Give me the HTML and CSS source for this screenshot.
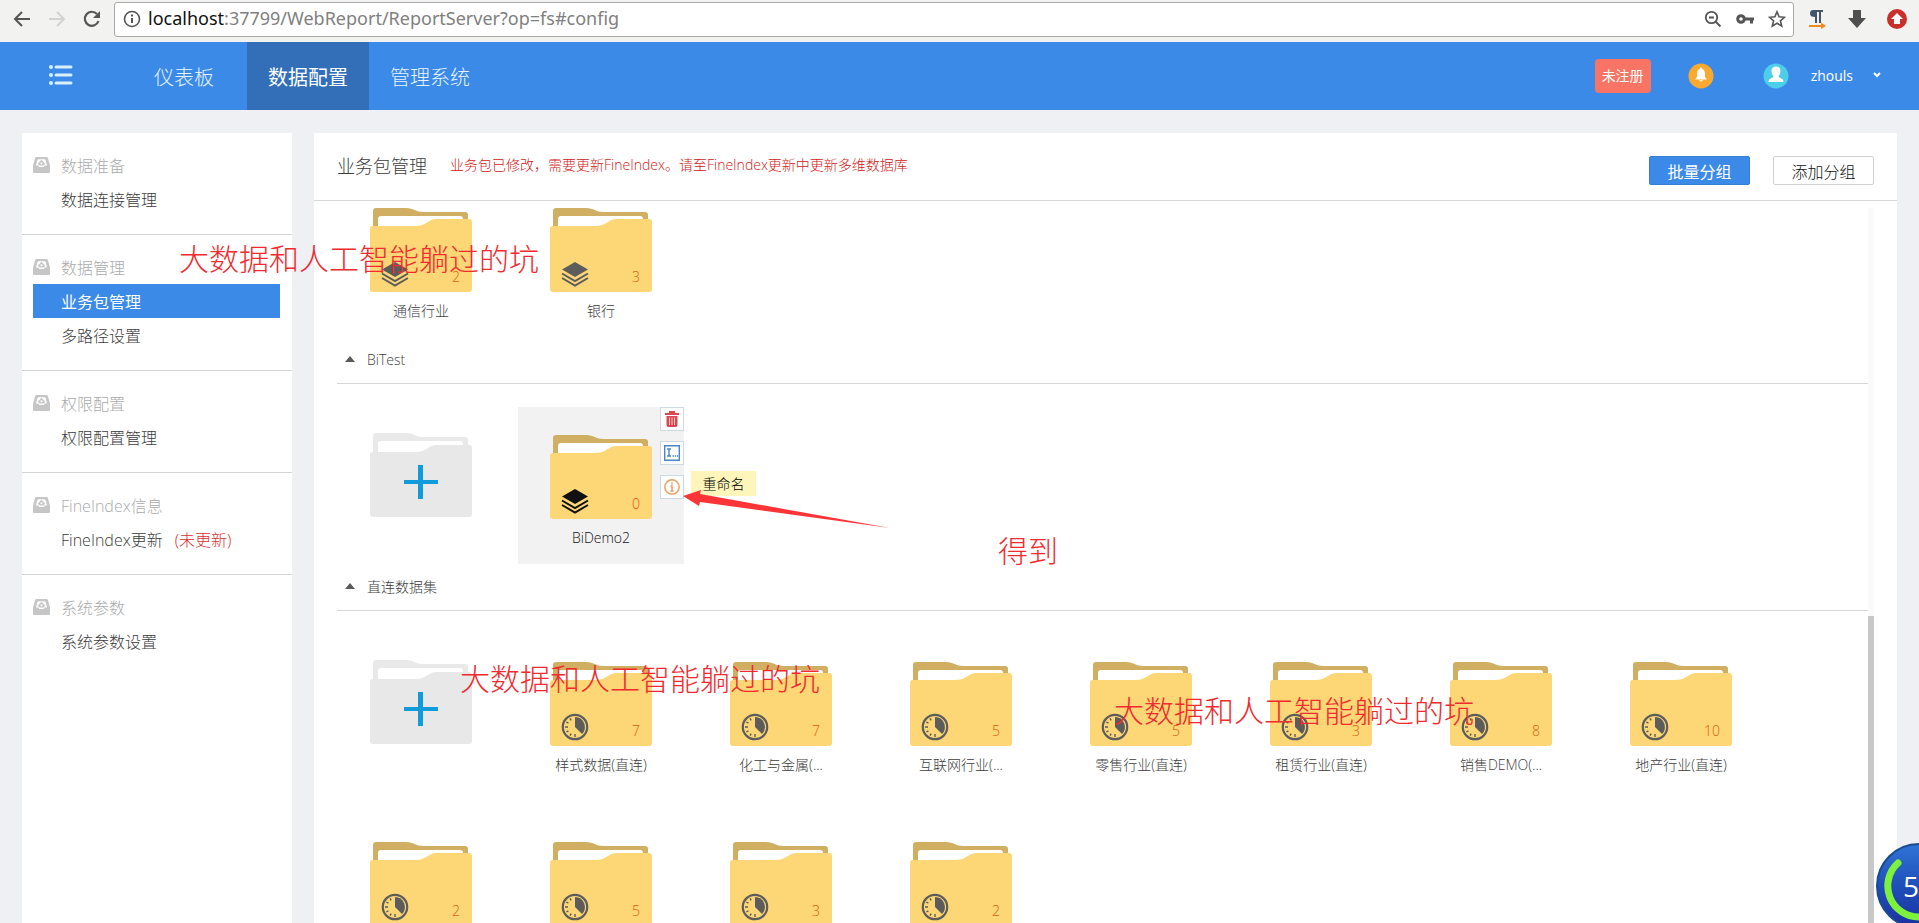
FILE: index.html
```html
<!DOCTYPE html>
<html lang="zh-CN">
<head>
<meta charset="utf-8">
<title>业务包管理</title>
<link rel="stylesheet" href="styles.css">
</head>
<body>
<svg class="defs" aria-hidden="true">
  <symbol id="folder" viewBox="0 0 102 84">
    <path d="M3 30V3q0-3 3-3h30c8 0 9 4 18 4h41q3 0 3 3v20z" fill="#d0af62"/>
    <path d="M8 26V11q0-3 3-3h79q3 0 3 3v12z" fill="#fff"/>
    <path d="M0 81V21q0-3 3-3h42c12 0 13-7 22-7h32q3 0 3 3v67q0 3-3 3H3q-3 0-3-3z" fill="#fdd675"/>
  </symbol>
  <symbol id="folder-add" viewBox="0 0 102 84">
    <path d="M3 30V3q0-3 3-3h30c8 0 9 4 18 4h41q3 0 3 3v20z" fill="#e9e9e9"/>
    <path d="M8 26V11q0-3 3-3h79q3 0 3 3v12z" fill="#fff"/>
    <path d="M0 81V22q0-3 3-3h42c12 0 13-7 22-7h32q3 0 3 3v66q0 3-3 3H3q-3 0-3-3z" fill="#e8e8e8"/>
    <path d="M48 32h5v15h15v4H53v15h-5V51H34v-4h14z" fill="#109bdb"/>
  </symbol>
  <symbol id="layers" viewBox="0 0 28 26">
    <path d="M14 1 27 8.500 14 16 1 8.500z" fill="currentColor"/>
    <path d="M1 12.500 14 20l13-7.500M1 17 14 24.500 27 17" fill="none" stroke="currentColor" stroke-width="2"/>
  </symbol>
  <symbol id="clock" viewBox="0 0 28 28">
    <circle cx="14" cy="14" r="12.200" fill="none" stroke="currentColor" stroke-width="2.200"/>
    <path d="M14 4a10 10 0 0 1 7 17L14 14z" fill="currentColor"/>
    <path d="M4 14h3M14 21v3M5.400 9l2 1.200M9 5.400l1.200 2M5.400 19l2-1.200M9 22.600l1.200-2" stroke="currentColor" stroke-width="1.400"/>
  </symbol>
  <symbol id="drawer" viewBox="0 0 17 16">
    <path d="M3.500 0h10q1 0 1.400 1L17 8.500V15q0 1-1 1H1q-1 0-1-1V8.500L2.100 1q.4-1 1.400-1z" fill="#c6c6c6"/>
    <path d="M3 8.500 4.300 3.500Q4.600 2.200 5.700 2.200h5.600q1.100 0 1.400 1.300L14 8.500h-2.500L10.800 10H6.200l-.7-1.500z" fill="#fff"/>
    <path d="M8.500 2.800 12.300 6.800l-1.800 1.700h-4L4.700 6.800z" fill="#c6c6c6"/>
    <circle cx="8.500" cy="6.300" r="1.100" fill="#fff"/>
  </symbol>
</svg>

<div class="toolbar">
  <div class="history">
    <button class="icon-btn" aria-label="后退"><svg width="18" height="18" viewBox="0 0 18 18"><path d="M17 9H2M9 2 2 9l7 7" fill="none" stroke="#555" stroke-width="2"/></svg></button>
    <button class="icon-btn" aria-label="前进"><svg width="18" height="18" viewBox="0 0 18 18"><path d="M1 9h15M9 2l7 7-7 7" fill="none" stroke="#d2d2d2" stroke-width="2"/></svg></button>
    <button class="icon-btn" aria-label="刷新"><svg width="18" height="18" viewBox="0 0 18 18"><path d="M15.500 11A7 7 0 1 1 14 4" fill="none" stroke="#555" stroke-width="2.200"/><path d="M17 1v7h-7z" fill="#555"/></svg></button>
  </div>
  <div class="address">
    <svg width="18" height="18" viewBox="0 0 18 18"><circle cx="9" cy="9" r="7.500" fill="none" stroke="#555" stroke-width="1.600"/><path d="M9 8v5M9 4.500v2" stroke="#555" stroke-width="2"/></svg>
    <div class="url"><span class="host">localhost</span>:37799/WebReport/ReportServer?op=fs#config</div>
    <button class="icon-btn" aria-label="缩放"><svg width="18" height="18" viewBox="0 0 18 18"><circle cx="7.500" cy="7.500" r="5.700" fill="none" stroke="#555" stroke-width="1.800"/><path d="M5 7.500h5M11.500 11.500l5 5" stroke="#555" stroke-width="1.800"/></svg></button>
    <button class="icon-btn" aria-label="密码"><svg width="18" height="18" viewBox="0 0 18 18"><circle cx="5" cy="9" r="3.300" fill="none" stroke="#555" stroke-width="3"/><path d="M8 7.500h10v3h-1v3h-3v-3H8z" fill="#555"/></svg></button>
    <button class="icon-btn" aria-label="收藏"><svg width="18" height="18" viewBox="0 0 18 18"><path d="m9 1.800 2.100 5 5.400.5-4.100 3.500 1.300 5.300L9 13.200l-4.700 2.900 1.300-5.300L1.500 7.300l5.400-.5z" fill="none" stroke="#555" stroke-width="1.600"/></svg></button>
  </div>
  <div class="extensions">
    <button class="icon-btn" aria-label="段落"><svg width="20" height="20" viewBox="0 0 20 20"><path d="M6 1h10v2h-2v11h-2V3h-2v11H8V8Q3 8 3 4.500T6 1z" fill="#44566a"/><path d="M2 16h12v-2.500l5 3.500-5 3v-2H2z" fill="#f28a1c"/></svg></button>
    <button class="icon-btn" aria-label="下载"><svg width="20" height="20" viewBox="0 0 20 20"><path d="M6 1h8v8h5l-9 10L1 9h5z" fill="#4f4f4f"/></svg></button>
    <button class="icon-btn" aria-label="更新"><svg width="20" height="20" viewBox="0 0 20 20"><circle cx="10" cy="10" r="10" fill="#c92f2b"/><path d="m10 4 6 6h-3v5H7v-5H4z" fill="#fff"/></svg></button>
  </div>
</div>

<header class="header">
  <button class="menu" aria-label="菜单"><svg width="24" height="20" viewBox="0 0 24 20"><path d="M7 2h15M7 10h15M7 18h15" stroke="#d9f0ff" stroke-width="3" stroke-linecap="round"/><circle cx="2" cy="2" r="2" fill="#d9f0ff"/><circle cx="2" cy="10" r="2" fill="#d9f0ff"/><circle cx="2" cy="18" r="2" fill="#d9f0ff"/></svg></button>
  <nav class="tabs">
    <a class="tab first" href="#dashboard">仪表板</a>
    <a class="tab active" href="#config">数据配置</a>
    <a class="tab" href="#system">管理系统</a>
  </nav>
  <div class="user">
    <button class="register">未注册</button>
    <button class="icon-btn" aria-label="通知"><svg width="26" height="26" viewBox="0 0 26 26"><circle cx="13" cy="13" r="12.500" fill="#fba92f"/><path d="M13 4.500q1.200 0 1.400 1.400Q17 7 17 11v3l2 2.500H7L9 14v-3q0-4 2.600-5.100Q11.800 4.500 13 4.500zM11 17.300h4q-.5 1.200-2 1.200t-2-1.200z" fill="#fff"/></svg></button>
    <button class="icon-btn avatar" aria-label="头像"><svg width="26" height="26" viewBox="0 0 26 26"><circle cx="13" cy="13" r="12.500" fill="#4dcfea"/><path d="M13 3.500q4.500 0 4.500 5 0 2.500-2 4.500 0 1.300 2 2 3 1 3 4H5.500q0-3 3-4 2-.7 2-2-2-2-2-4.500 0-5 4.500-5z" fill="#fff"/></svg></button>
    <button class="account">zhouls<svg width="8" height="6" viewBox="0 0 8 6"><path d="m1 1 3 3 3-3" fill="none" stroke="#fff" stroke-width="2"/></svg></button>
  </div>
</header>

<div class="page">
  <aside class="sidebar">
    <section class="section">
      <h2 class="heading"><svg width="17" height="16"><use href="#drawer"/></svg>数据准备</h2>
      <a class="item" href="#connection">数据连接管理</a>
    </section>
    <section class="section">
      <h2 class="heading"><svg width="17" height="16"><use href="#drawer"/></svg>数据管理</h2>
      <a class="item selected" href="#packages">业务包管理</a>
      <a class="item" href="#paths">多路径设置</a>
    </section>
    <section class="section">
      <h2 class="heading"><svg width="17" height="16"><use href="#drawer"/></svg>权限配置</h2>
      <a class="item" href="#permission">权限配置管理</a>
    </section>
    <section class="section">
      <h2 class="heading"><svg width="17" height="16"><use href="#drawer"/></svg>FineIndex信息</h2>
      <a class="item" href="#fineindex">FineIndex更新<span class="pending">(未更新)</span></a>
    </section>
    <section class="section">
      <h2 class="heading"><svg width="17" height="16"><use href="#drawer"/></svg>系统参数</h2>
      <a class="item" href="#params">系统参数设置</a>
    </section>
  </aside>

  <main class="panel">
    <div class="panel-head">
      <h1 class="title">业务包管理</h1>
      <p class="warning">业务包已修改，需要更新FineIndex。请至FineIndex更新中更新多维数据库</p>
      <div class="actions">
        <button class="btn primary">批量分组</button>
        <button class="btn">添加分组</button>
      </div>
    </div>
    <div class="scroll-wrap">
      <div class="scroller">
        <div class="tiles scrolled">
          <div class="tile"><div class="folder"><svg class="shape"><use href="#folder"/></svg><svg class="mark layers"><use href="#layers"/></svg><span class="count">2</span></div><div class="name">通信行业</div></div>
          <div class="tile"><div class="folder"><svg class="shape"><use href="#folder"/></svg><svg class="mark layers"><use href="#layers"/></svg><span class="count">3</span></div><div class="name">银行</div></div>
        </div>
        <h3 class="group"><span class="caret"></span>BiTest</h3>
        <div class="tiles">
          <button class="tile add" aria-label="添加业务包"><svg class="shape"><use href="#folder-add"/></svg></button>
          <div class="tile hovered">
            <div class="folder"><svg class="shape"><use href="#folder"/></svg><svg class="mark layers"><use href="#layers"/></svg><span class="count">0</span></div><div class="name">BiDemo2</div>
            <div class="tools">
              <button class="tool" aria-label="删除"><svg width="16" height="18" viewBox="0 0 16 18"><path d="M5 1h6v2h4v2H1V3h4zM2.500 6h11v9q0 2-2 2h-7q-2 0-2-2z" fill="#dc4650"/><path d="M5.500 7.500V15M8 7.500V15M10.500 7.500V15" stroke="#f9c8ca" stroke-width="1"/></svg></button>
              <button class="tool" aria-label="重命名"><svg width="16" height="16" viewBox="0 0 16 16"><path d="M.7.7h14.600v14.600H.7z" fill="none" stroke="#4a86cc" stroke-width="1.400"/><path d="M3 4h4M5 4v7M3 11h4M8.500 11H10M10.800 11h1.400M13 11h1.200" stroke="#4a86cc" stroke-width="1.400"/></svg></button>
              <button class="tool" aria-label="信息"><svg width="16" height="16" viewBox="0 0 16 16"><circle cx="8" cy="8" r="7.200" fill="none" stroke="#ee9a57" stroke-width="1.400"/><path d="M8 3.500v2M6.500 7H8v5M6.500 12h3" fill="none" stroke="#ee9a57" stroke-width="1.500"/></svg></button>
            </div>
            <div class="tip" role="tooltip">重命名</div>
            <svg class="arrow" width="210" height="42" viewBox="0 0 210 42"><path d="m0 8 18-6-1 4 190 34L17 14l-1 4z" fill="#fb3437"/></svg>
          </div>
        </div>
        <h3 class="group"><span class="caret"></span>直连数据集</h3>
        <div class="tiles">
          <button class="tile add" aria-label="添加数据集"><svg class="shape"><use href="#folder-add"/></svg></button>
          <div class="tile"><div class="folder"><svg class="shape"><use href="#folder"/></svg><svg class="mark clock"><use href="#clock"/></svg><span class="count">7</span></div><div class="name">样式数据(直连)</div></div>
          <div class="tile"><div class="folder"><svg class="shape"><use href="#folder"/></svg><svg class="mark clock"><use href="#clock"/></svg><span class="count">7</span></div><div class="name">化工与金属(...</div></div>
          <div class="tile"><div class="folder"><svg class="shape"><use href="#folder"/></svg><svg class="mark clock"><use href="#clock"/></svg><span class="count">5</span></div><div class="name">互联网行业(...</div></div>
          <div class="tile"><div class="folder"><svg class="shape"><use href="#folder"/></svg><svg class="mark clock"><use href="#clock"/></svg><span class="count">5</span></div><div class="name">零售行业(直连)</div></div>
          <div class="tile"><div class="folder"><svg class="shape"><use href="#folder"/></svg><svg class="mark clock"><use href="#clock"/></svg><span class="count">3</span></div><div class="name">租赁行业(直连)</div></div>
          <div class="tile"><div class="folder"><svg class="shape"><use href="#folder"/></svg><svg class="mark clock"><use href="#clock"/></svg><span class="count">8</span></div><div class="name">销售DEMO(...</div></div>
          <div class="tile"><div class="folder"><svg class="shape"><use href="#folder"/></svg><svg class="mark clock"><use href="#clock"/></svg><span class="count">10</span></div><div class="name">地产行业(直连)</div></div>
          <div class="tile"><div class="folder"><svg class="shape"><use href="#folder"/></svg><svg class="mark clock"><use href="#clock"/></svg><span class="count">2</span></div></div>
          <div class="tile"><div class="folder"><svg class="shape"><use href="#folder"/></svg><svg class="mark clock"><use href="#clock"/></svg><span class="count">5</span></div></div>
          <div class="tile"><div class="folder"><svg class="shape"><use href="#folder"/></svg><svg class="mark clock"><use href="#clock"/></svg><span class="count">3</span></div></div>
          <div class="tile"><div class="folder"><svg class="shape"><use href="#folder"/></svg><svg class="mark clock"><use href="#clock"/></svg><span class="count">2</span></div></div>
        </div>
      </div>
      <div class="track"><div class="thumb"></div></div>
    </div>
  </main>
</div>

<div class="note note-a">大数据和人工智能躺过的坑</div>
<div class="note note-b">大数据和人工智能躺过的坑</div>
<div class="note note-c">大数据和人工智能躺过的坑</div>
<div class="note note-d">得到</div>

<div class="gauge">
  <svg width="86" height="86" viewBox="0 0 86 86">
    <defs><linearGradient id="ball" x2="0" y2="1"><stop offset="0" stop-color="#2f74d6"/><stop offset=".5" stop-color="#1f4fb8"/><stop offset="1" stop-color="#1a2fa0"/></linearGradient></defs>
    <circle cx="43" cy="43" r="42" fill="url(#ball)" stroke="#1b4a90" stroke-width="2"/>
    <path d="M22 20A31 31 0 0 0 43 74" fill="none" stroke="#7cf23c" stroke-width="7" stroke-linecap="round"/>
  </svg>
  <span class="gauge-value">5</span>
</div>
</body>
</html>
```
FILE: styles.css
```css
* { box-sizing: border-box; }

body {
  margin: 0;
  height: 100vh;
  display: flex;
  flex-direction: column;
  position: relative;
  overflow: hidden;
  background: #eff0f4;
  color: #3c3c3c;
  font-family: "Open Sans", "Noto Sans CJK SC", sans-serif;
  font-size: 16px;
  font-weight: 300;
}

button { font: inherit; color: inherit; border: 0; background: none; padding: 0; }
a { color: inherit; text-decoration: none; }
h1, h2, h3, p { margin: 0; font-weight: inherit; }
svg { display: block; flex: none; }
.defs { position: absolute; width: 0; height: 0; }
.icon-btn { flex: none; }

/* Browser bar */
.toolbar {
  flex: none;
  height: 42px;
  padding: 1px 12px 5px 13px;
  display: flex;
  align-items: center;
  background: #f2f2f1;
}
.history { display: flex; gap: 17px; width: 101px; }
.address {
  flex: 1;
  height: 35px;
  padding: 0 7px 0 8px;
  display: flex;
  align-items: center;
  gap: 14px;
  background: #fff;
  border: 1px solid #a9a9a9;
  border-radius: 3px;
}
.url {
  flex: 1;
  margin-left: -7px;
  padding-bottom: 2px;
  font-family: "Noto Sans", "Noto Sans CJK SC", sans-serif;
  font-size: 18px;
  font-weight: 400;
  color: #808080;
}
.host { color: #111; }
.extensions { display: flex; gap: 20px; padding-left: 13px; }

/* Application header */
.header {
  flex: none;
  height: 68px;
  display: flex;
  align-items: stretch;
  background: #3c8ae8;
  color: #fff;
}
.menu { margin-left: 49px; width: 84px; padding-bottom: 2px; }
.tabs { flex: 1; display: flex; }
.tab {
  padding: 0 21px;
  display: flex;
  align-items: center;
  font-size: 20px;
  color: #e6f4ff;
}
.tab.first { margin-right: 12px; }
.tab.active { background: #336fb9; color: #fff; font-weight: 400; }
.user { display: flex; align-items: center; padding-right: 38px; }
.register {
  width: 56px;
  height: 34px;
  margin-right: 37px;
  padding-bottom: 2px;
  border-radius: 4px;
  background: #f87464;
  font-size: 14px;
  font-weight: 400;
}
.avatar { margin: 0 22px 0 49px; }
.account {
  display: flex;
  align-items: center;
  gap: 20px;
  padding-bottom: 2px;
  font-size: 14px;
  font-weight: 400;
}

/* Page body */
.page {
  flex: 1;
  min-height: 0;
  display: flex;
  gap: 22px;
  padding: 23px 22px 0;
}
.sidebar { flex: none; width: 270px; background: #fff; }
.section { padding: 15px 12px 18px 11px; border-bottom: 1px solid #d2d4d6; }
.section:last-child { border: 0; }
.heading {
  display: flex;
  align-items: center;
  gap: 11px;
  height: 34px;
  font-size: 16px;
  color: #ababab;
}
.item { display: flex; align-items: center; height: 34px; padding-left: 28px; }
.item.selected { background: #3c8ae8; color: #fff; font-weight: 400; }
.pending { margin-left: 12px; color: #d93030; }

.panel { flex: 1; min-width: 0; display: flex; flex-direction: column; background: #fff; }
.panel-head {
  flex: none;
  height: 68px;
  padding: 0 23px;
  display: flex;
  align-items: center;
  gap: 23px;
  border-bottom: 1px solid #d4d6d8;
}
.title { padding-bottom: 3px; font-size: 18px; }
.warning { padding-bottom: 5px; font-size: 14px; color: #cf2020; }
.actions { margin-left: auto; display: flex; gap: 23px; padding-top: 8px; }
.btn {
  width: 101px;
  height: 29px;
  border: 1px solid #d0d2d5;
  border-radius: 2px;
  color: #111;
}
.btn.primary { background: #3c8ae8; border-color: #347fd8; color: #fff; font-weight: 400; }

.scroll-wrap { flex: 1; min-height: 0; display: flex; padding: 7px 23px 0; }
.scroller { flex: 1; min-width: 0; overflow: hidden; }
.track { flex: none; width: 6px; display: flex; align-items: flex-end; background: #fafafa; }
.thumb { width: 6px; height: 43%; background: #c8c8c8; }

.group {
  height: 47px;
  display: flex;
  align-items: center;
  gap: 12px;
  padding: 0 0 2px 8px;
  font-size: 14px;
  border-bottom: 1px solid #d4d6d8;
}
.caret { border: 5px solid transparent; border-top: 0; border-bottom: 6px solid #5a5a5a; }
.tiles {
  display: grid;
  grid-template-columns: repeat(auto-fill, 166px);
  gap: 23px 14px;
  padding: 23px 0 0 1px;
}
.tiles.scrolled { margin-top: -28px; padding-top: 0; }
.tile {
  position: relative;
  height: 157px;
  padding-top: 28px;
  display: flex;
  flex-direction: column;
  align-items: center;
  gap: 9px;
}
.tile.add { padding-top: 26px; }
.tile.hovered { background: #f2f2f2; color: #111; }
.folder { position: relative; color: #5c5c5c; }
.hovered .folder { color: #111; }
.shape { width: 102px; height: 84px; }
.mark { position: absolute; left: 11px; }
.mark.layers { top: 53px; width: 28px; height: 26px; }
.mark.clock { top: 51px; width: 28px; height: 28px; }
.count {
  position: absolute;
  right: 12px;
  bottom: 5px;
  line-height: 20px;
  font-size: 14px;
  color: #d6610f;
}
.hovered .count { color: #ee4f16; }
.name { font-size: 14px; line-height: 20px; }

.tools {
  position: absolute;
  top: 0;
  right: 0;
  display: flex;
  flex-direction: column;
  gap: 10px;
}
.tool {
  width: 24px;
  height: 24px;
  display: flex;
  align-items: center;
  justify-content: center;
  background: #fff;
  border: 1px solid #ccdbe2;
}
.tip {
  position: absolute;
  left: 173px;
  top: 64px;
  width: 65px;
  line-height: 25px;
  text-align: center;
  font-size: 14px;
  color: #000;
  background: #fdf5b9;
}
.arrow { position: absolute; left: 165px; top: 81px; }

/* Annotations over the page */
.note {
  position: absolute;
  font-size: 30px;
  line-height: 36px;
  font-weight: 300;
  color: #f02a2e;
  white-space: nowrap;
}
.note-a { left: 179px; top: 241px; }
.note-b { left: 460px; top: 661px; }
.note-c { left: 1114px; top: 693px; }
.note-d { left: 998px; top: 533px; }

.gauge { position: absolute; right: -43px; bottom: -6px; }
.gauge-value {
  position: absolute;
  left: 27px;
  top: 25px;
  font-size: 28px;
  line-height: 36px;
  font-weight: 400;
  color: #fff;
}
```
